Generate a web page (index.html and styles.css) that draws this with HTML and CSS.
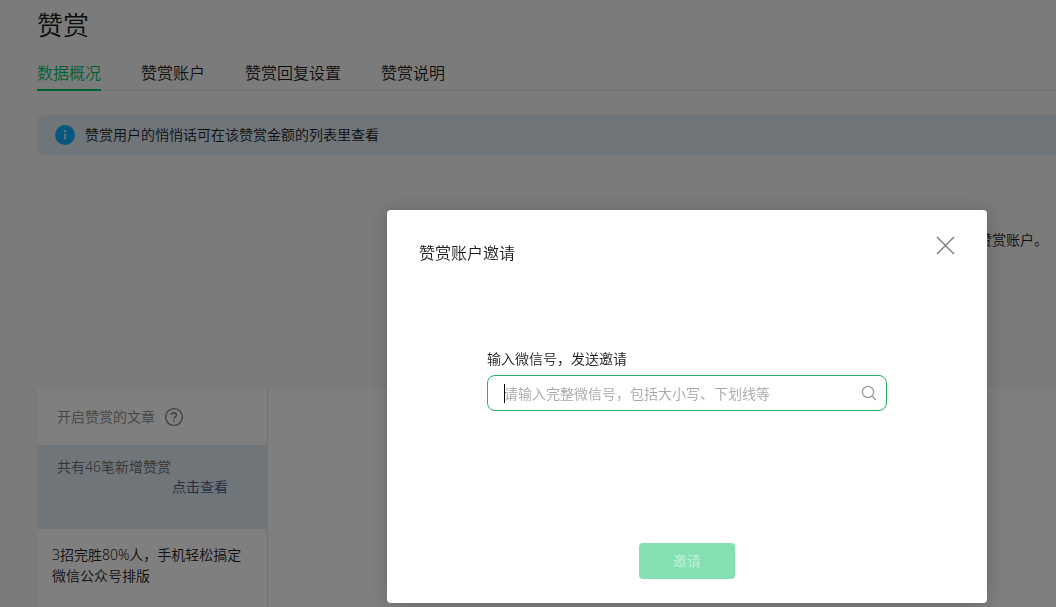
FILE: index.html
```html
<!DOCTYPE html>
<html lang="zh-CN">
<head>
<meta charset="utf-8">
<title>赞赏</title>
<link rel="stylesheet" href="styles.css">
</head>
<body>
<main class="page">
  <h1 class="page-title">赞赏</h1>
  <nav class="tabs">
    <a class="tab tab-active" href="#overview">数据概况</a>
    <a class="tab" href="#account">赞赏账户</a>
    <a class="tab" href="#reply">赞赏回复设置</a>
    <a class="tab" href="#about">赞赏说明</a>
  </nav>
  <div class="notice">
    <svg class="notice-icon" viewBox="0 0 20 20" aria-hidden="true">
      <circle cx="10" cy="10" r="10" fill="#10aeff"/>
      <circle cx="10" cy="6" r="1" fill="#fff"/>
      <path d="M10 8.3v6.2" stroke="#fff" stroke-width="1.3"/>
    </svg>
    <span>赞赏用户的悄悄话可在该赞赏金额的列表里查看</span>
  </div>
  <p class="account-tip">赞赏账户。</p>
  <div class="panel">
    <aside class="articles">
      <div class="articles-head">
        <span>开启赞赏的文章</span>
        <svg class="help-icon" viewBox="0 0 20 20" aria-hidden="true" fill="none" stroke="#808080" stroke-width="1.4">
          <circle cx="10" cy="10" r="8.4"/>
          <path d="M7.6 8.1C7.6 6.600 8.600 5.700 10 5.700s2.400.9 2.400 2.200c0 1.900-2.400 2-2.400 4"/>
          <path d="M10 13.300v1.500"/>
        </svg>
      </div>
      <div class="summary">
        <span>共有46笔新增赞赏</span>
        <a class="summary-link" href="#new">点击查看</a>
      </div>
      <p class="article">3招完胜80%人，手机轻松搞定微信公众号排版</p>
    </aside>
    <section class="detail"></section>
  </div>
</main>
<div class="mask">
  <form class="dialog" role="dialog" aria-labelledby="dialog-title">
    <header class="dialog-head">
      <h2 class="dialog-title" id="dialog-title">赞赏账户邀请</h2>
      <button class="close" type="button" aria-label="关闭">
        <svg class="close-icon" viewBox="0 0 20 20" fill="none" stroke="#808080" stroke-width="1.5"><path d="M2 1l17 17M19 1L2 18"/></svg>
      </button>
    </header>
    <div class="field">
      <label class="field-label" for="wechat-id">输入微信号，发送邀请</label>
      <div class="search">
        <input class="search-input" id="wechat-id" type="text" placeholder="请输入完整微信号，包括大小写、下划线等">
        <span class="caret"></span>
        <svg class="search-icon" viewBox="0 0 16 16" aria-hidden="true" fill="none" stroke="#999" stroke-width="1.3"><circle cx="7" cy="7" r="5.600"/><path d="M11 11l4 4"/></svg>
      </div>
    </div>
    <button class="submit" type="submit" disabled>邀请</button>
  </form>
</div>
</body>
</html>
```

FILE: styles.css
```css
* { box-sizing: border-box; }

body {
  margin: 0;
  min-height: 100vh;
  overflow: hidden;
  background: #f6f6f6;
  color: #1a1a1a;
  font: 350 14px/20px "Noto Sans", "Noto Sans CJK SC", sans-serif;
}

h1, h2, p { margin: 0; font-weight: inherit; }
a { color: inherit; text-decoration: none; }
button, input { font: inherit; }

.page {
  height: 100vh;
  padding: 5px 0 0 37px;
  display: flex;
  flex-direction: column;
}

.page-title { font-size: 26px; line-height: 40px; }

.tabs {
  display: flex;
  gap: 40px;
  margin-top: 14px;
  border-bottom: 1px solid #e4e4e4;
  font-size: 16px;
  line-height: 28px;
}

.tab {
  padding-bottom: 2px;
  margin-bottom: -1px;
  border-bottom: 2px solid transparent;
}

.tab-active { color: #07c160; border-color: #07c160; }

.notice {
  display: flex;
  align-items: center;
  gap: 10px;
  height: 40px;
  margin-top: 24px;
  padding: 0 18px;
  border-radius: 8px 0 0 8px;
  background: #deebf2;
}

.notice-icon { width: 20px; height: 20px; }

.account-tip { margin-top: 75px; padding-right: 8px; text-align: right; }

.panel {
  flex: 1;
  display: flex;
  margin-top: 138px;
  background: #fff;
}

.articles { width: 231px; border-right: 1px solid #e7e7eb; }
.detail { flex: 1; }

.articles-head {
  display: flex;
  align-items: center;
  gap: 9px;
  height: 57px;
  padding-left: 20px;
  color: #8a8a8a;
}

.help-icon { width: 20px; height: 20px; }

.summary {
  display: flex;
  flex-direction: column;
  height: 84px;
  margin-right: -1px;
  padding: 12px 40px 0 20px;
  background: #deebf2;
  color: #666;
}

.summary-link { align-self: flex-end; color: #465a85; }

.article { padding: 15px 20px 0 15px; line-height: 21px; }

.mask {
  position: fixed;
  inset: 0;
  display: flex;
  justify-content: flex-end;
  align-items: flex-start;
  padding: 210px 69px 0 0;
  background: rgba(0, 0, 0, 0.5);
}

.dialog {
  width: 600px;
  padding: 26px 32px 24px;
  display: flex;
  flex-direction: column;
  border-radius: 4px;
  background: #fff;
  box-shadow: 0 1px 20px rgba(0, 0, 0, 0.2);
}

.dialog-head { display: flex; justify-content: space-between; }
.dialog-title { padding-top: 5px; font-size: 16px; line-height: 24px; }

.close {
  width: 20px;
  height: 20px;
  padding: 0;
  border: 0;
  background: none;
}

.close-icon { display: block; width: 20px; height: 20px; }

.field { margin-top: 84px; padding: 0 68px; }
.field-label { display: block; }

.search { position: relative; margin-top: 6px; }

.search-input {
  display: block;
  width: 100%;
  height: 36px;
  padding: 0 40px 0 16px;
  border: 1px solid #2aae67;
  border-radius: 8px;
  outline: 0;
}

.search-input::placeholder { color: #a6a6a6; }

.caret {
  position: absolute;
  top: 9px;
  left: 17px;
  width: 1px;
  height: 19px;
  background: #000;
}

.search-icon {
  position: absolute;
  top: 10px;
  right: 10px;
  width: 16px;
  height: 16px;
}

.submit {
  align-self: center;
  width: 96px;
  height: 36px;
  margin-top: 132px;
  border: 0;
  border-radius: 4px;
  background: #83e0b0;
  color: #c4efd8;
}
```
